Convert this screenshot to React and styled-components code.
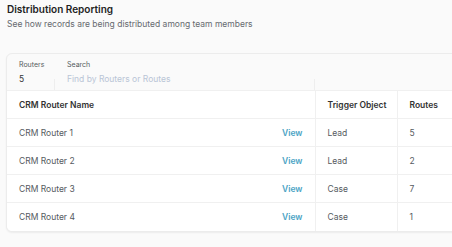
import styled, { createGlobalStyle } from "styled-components";

const GlobalStyle = createGlobalStyle`
	html, body {
		margin: 0;
		padding: 0;
		overflow: hidden;
		background: #fafafa;
		font-family: Inter, "Noto Sans", sans-serif;
	}
`;

const routers = [
	{ name: "CRM Router 1", trigger: "Lead", routes: 5 },
	{ name: "CRM Router 2", trigger: "Lead", routes: 2 },
	{ name: "CRM Router 3", trigger: "Case", routes: 7 },
	{ name: "CRM Router 4", trigger: "Case", routes: 1 },
];

export default function App() {
	return (
		<Page>
			<GlobalStyle />
			<Header>
				<h1>Distribution Reporting</h1>
				<p>See how records are being distributed among team members</p>
			</Header>
			<Card>
				<FilterBar>
					<FilterCell $width={48} $divider>
						<Label>Routers</Label>
						<Value>5</Value>
					</FilterCell>
					<FilterCell $width={260} $divider>
						<Label>Search</Label>
						<SearchInput placeholder="Find by Routers or Routes" />
					</FilterCell>
					<FilterCell />
				</FilterBar>
				<Table>
					<colgroup>
						<col style={{ width: 308 }} />
						<col style={{ width: 82 }} />
						<col />
					</colgroup>
					<thead>
						<tr>
							<Th>CRM Router Name</Th>
							<Th>Trigger Object</Th>
							<Th>Routes</Th>
						</tr>
					</thead>
					<tbody>
						{routers.map((r) => (
							<tr key={r.name}>
								<Td>
									<NameCell>
										<span>{r.name}</span>
										<ViewLink>View</ViewLink>
									</NameCell>
								</Td>
								<Td>{r.trigger}</Td>
								<Td>{r.routes}</Td>
							</tr>
						))}
					</tbody>
				</Table>
			</Card>
		</Page>
	);
}

const Page = styled.div`
	width: 452px;
	height: 247px;
	overflow: hidden;
	padding: 3px 0 0 7px;
	box-sizing: border-box;
`;

const Header = styled.div`
	h1 {
		margin: 0;
		font-size: 10px;
		line-height: 13px;
		font-weight: 600;
		color: #222222;
	}
	p {
		margin: 2px 0 0;
		font-size: 8.5px;
		line-height: 12px;
		color: #666a70;
	}
`;

const Card = styled.div`
	margin: 23px 0 0 -1px;
	width: 480px;
	border: 1px solid #ececec;
	border-radius: 6px;
	overflow: hidden;
	background: #fafafa;
	box-shadow: 0 1px 2px rgba(0, 0, 0, 0.06);
`;

const FilterBar = styled.div`
	display: flex;
	height: 36px;
`;

const FilterCell = styled.div`
	position: relative;
	display: flex;
	flex-direction: column;
	box-sizing: border-box;
	padding: 6px 0 0 12px;
	width: ${(p) => (p.$width ? `${p.$width}px` : "auto")};
	flex: ${(p) => (p.$width ? "none" : "1")};
	&::after {
		content: "";
		display: ${(p) => (p.$divider ? "block" : "none")};
		position: absolute;
		right: 0;
		top: 25px;
		bottom: 0;
		border-right: 1px solid #eeeeee;
	}
`;

const Label = styled.span`
	font-size: 7px;
	line-height: 10px;
	color: #555a60;
`;

const Value = styled.span`
	margin-top: 3px;
	font-size: 8.5px;
	line-height: 12px;
	color: #333333;
`;

const SearchInput = styled.input`
	margin-top: 3px;
	padding: 0;
	border: none;
	outline: none;
	background: transparent;
	font-family: inherit;
	font-size: 8.5px;
	line-height: 12px;
	height: 12px;
	color: #333333;
	&::placeholder {
		color: #b9c5d6;
	}
`;

const Table = styled.table`
	width: 100%;
	table-layout: fixed;
	border-collapse: collapse;
	background: #ffffff;
	font-size: 8.5px;
	color: #555a60;
	tr {
		height: 28px;
		border-top: 1px solid #f0f0f0;
	}
`;

const Th = styled.th`
	text-align: left;
	font-weight: 600;
	color: #333333;
	padding: 0 12px;
	white-space: nowrap;
	& + & {
		border-left: 1px solid #f0f0f0;
	}
`;

const Td = styled.td`
	padding: 0 12px;
	& + & {
		border-left: 1px solid #f0f0f0;
	}
`;

const NameCell = styled.div`
	display: flex;
	justify-content: space-between;
	align-items: center;
`;

const ViewLink = styled.a`
	color: #4aa3c4;
	font-weight: 600;
	cursor: pointer;
`;
